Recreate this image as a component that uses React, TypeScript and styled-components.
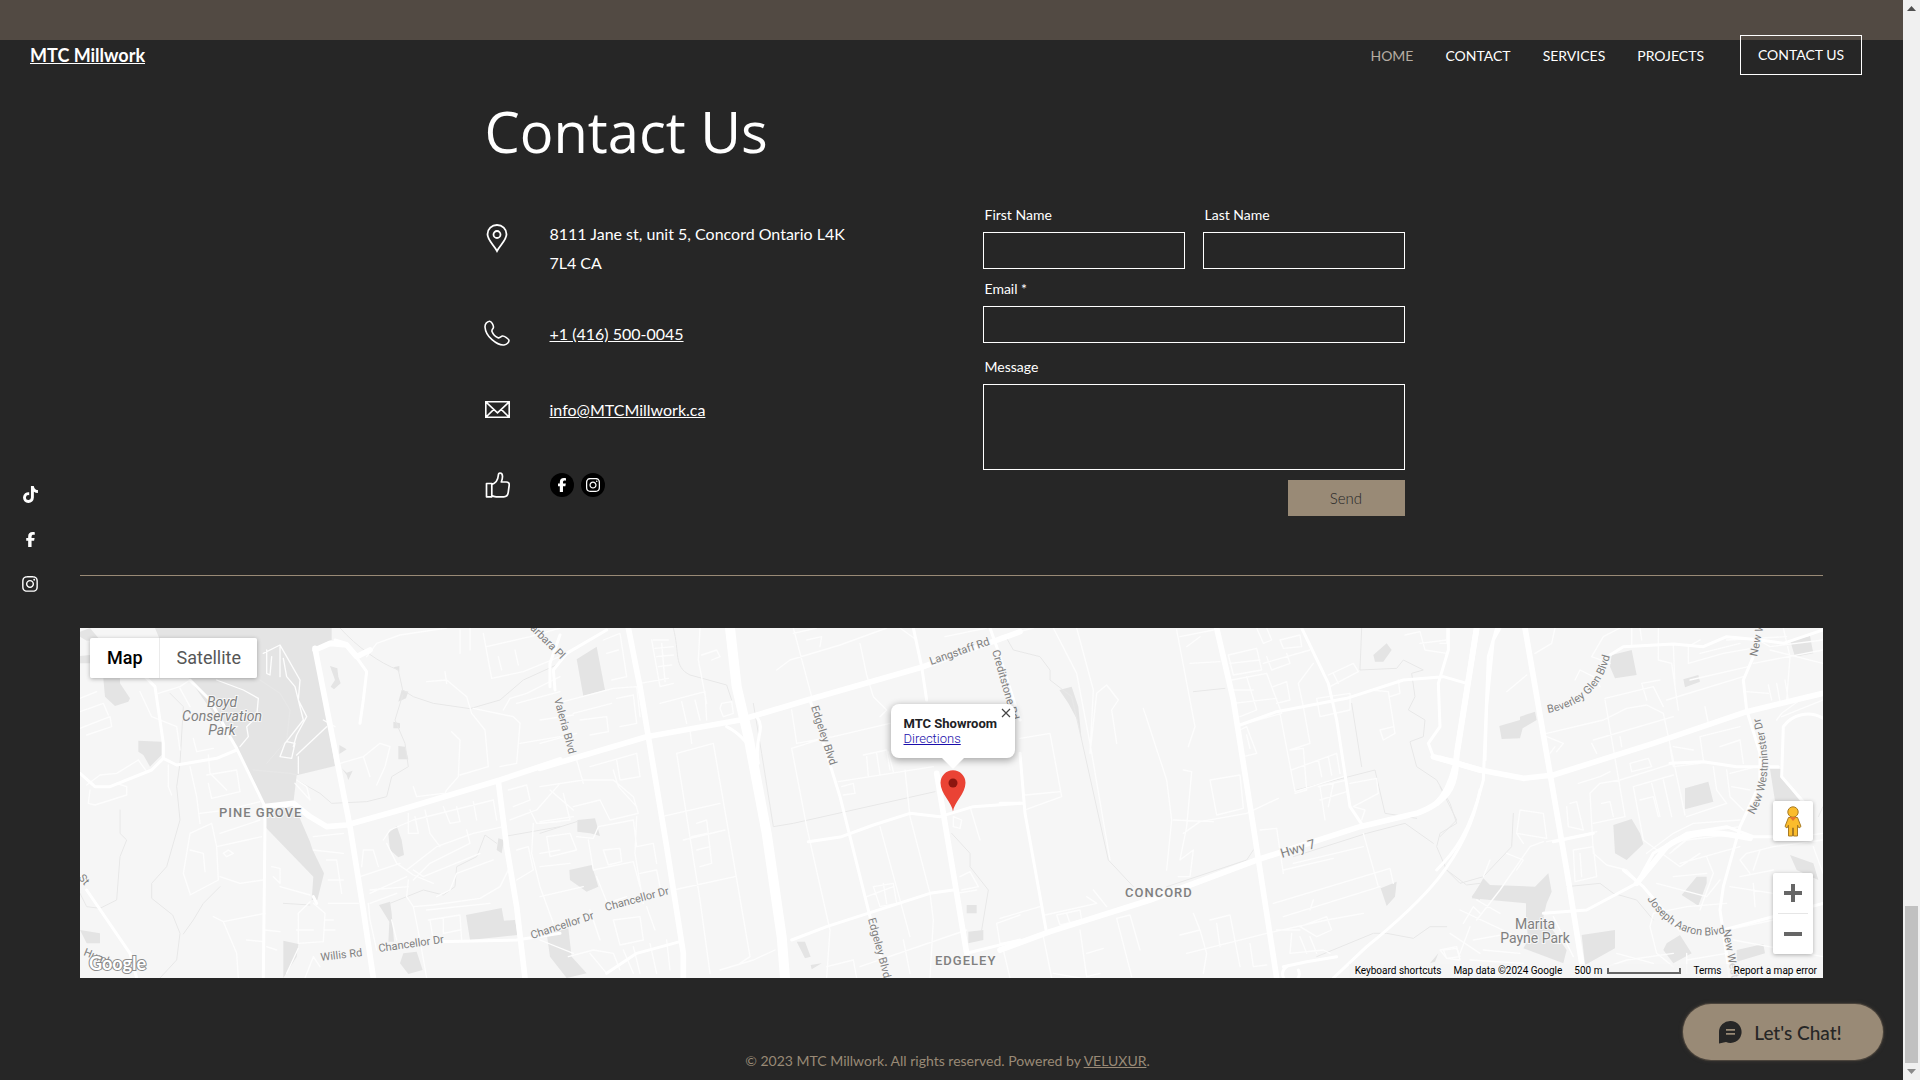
import React from "react";
import styled, { createGlobalStyle } from "styled-components";
import { FaFacebookF, FaInstagram, FaTiktok } from "react-icons/fa6";

const sans = `"Lato", "Open Sans", sans-serif`;
const wide = `"Open Sans", "Noto Sans", sans-serif`;
const roboto = `Roboto, "Liberation Sans", sans-serif`;
const tan = "#998a76";

const GlobalStyle = createGlobalStyle`
  *, *::before, *::after { box-sizing: border-box; }
  body { margin: 0; background: #262626; color: #fff; font-family: ${sans}; }
  h1, p, ul { margin: 0; padding: 0; }
  ul { list-style: none; }
  a { color: inherit; }
  button, input, textarea { font: inherit; }
`;

const Shell = styled.div`
  display: flex;
  min-height: 100vh;
`;

const Page = styled.div`
  position: relative;
  flex: 1;
  min-width: 0;
  display: flex;
  flex-direction: column;
`;

const Strip = styled.div`
  height: 40px;
  background: #524a43;
`;

const Header = styled.header`
  position: absolute;
  top: 35px;
  left: 0;
  right: 0;
  display: flex;
  align-items: center;
  justify-content: space-between;
  padding: 0 41px 0 30px;
`;

const Brand = styled.a`
  font-size: 18px;
  font-weight: 700;
  line-height: 24px;
`;

const Nav = styled.nav`
  display: flex;
  align-items: center;
  gap: 32px;
  font-size: 14px;
`;

const NavLink = styled.a<{ $active?: boolean }>`
  color: ${(p) => (p.$active ? "#b5aca2" : "#fff")};
  text-decoration: none;
`;

const ContactButton = styled.button`
  width: 122px;
  height: 40px;
  margin-left: 4px;
  padding: 0 0 2px;
  border: 1px solid #fff;
  background: transparent;
  color: #fff;
`;

const Contact = styled.main`
  width: 934px;
  max-width: 100%;
  margin: 0 auto;
  padding: 55px 14px 52px 0;
`;

const Title = styled.h1`
  font-family: ${wide};
  font-size: 56px;
  font-weight: 400;
  line-height: 72px;
`;

const Columns = styled.div`
  display: grid;
  grid-template-columns: minmax(0, 1fr) 422px;
  align-items: start;
  padding-top: 38px;
`;

const Details = styled.ul`
  padding-top: 14px;
`;

const Detail = styled.li<{ $top?: boolean }>`
  display: grid;
  grid-template-columns: 25px 304px;
  gap: 40px;
  align-items: ${(p) => (p.$top ? "start" : "center")};
  height: 76px;
  font-size: 16px;
  line-height: 29px;

  > svg {
    justify-self: center;
    margin-top: ${(p) => (p.$top ? 5 : 0)}px;
  }
`;

const Badges = styled.div`
  display: flex;
  gap: 7px;
`;

const Badge = styled.a`
  display: grid;
  place-items: center;
  width: 24px;
  height: 24px;
  border-radius: 50%;
  background: #000;
  color: #fff;
`;

const Form = styled.form`
  display: grid;
  grid-template-columns: 1fr 1fr;
  column-gap: 18px;
  row-gap: 10px;
`;

const Field = styled.label<{ $full?: boolean }>`
  display: flex;
  flex-direction: column;
  gap: 7px;
  grid-column: ${(p) => (p.$full ? "1 / -1" : "auto")};
  font-size: 14px;
  line-height: 20px;

  span { padding-left: 2px; }
`;

const Input = styled.input`
  width: 100%;
  height: 37px;
  padding: 0 10px;
  border: 1px solid #fff;
  border-radius: 0;
  background: transparent;
  color: #fff;
`;

const TextArea = styled.textarea`
  display: block;
  width: 100%;
  height: 86px;
  padding: 10px;
  border: 1px solid #fff;
  border-radius: 0;
  background: transparent;
  color: #fff;
  resize: none;
`;

const MessageField = styled(Field)`
  padding-top: 4px;
`;

const Send = styled.button`
  grid-column: 2;
  justify-self: end;
  width: 117px;
  height: 36px;
  padding: 0;
  border: 0;
  background: ${tan};
  color: #262626;
  font-size: 15px;
  font-weight: 300;
`;

const Divider = styled.hr`
  width: calc(100% - 160px);
  height: 1px;
  margin: 0 80px 52px;
  border: 0;
  background: ${tan};
`;

const MapFrame = styled.section`
  position: relative;
  height: 350px;
  margin: 0 80px;
  overflow: hidden;
  background: #f6f6f6;
  color: #000;
  font-family: ${roboto};
`;

const MapDrawing = styled.svg`
  display: block;
  width: 100%;
  height: 100%;
`;

const MapTypes = styled.div`
  position: absolute;
  top: 10px;
  left: 10px;
  display: flex;
  border-radius: 2px;
  overflow: hidden;
  box-shadow: 0 1px 4px rgba(0, 0, 0, 0.3);
`;

const MapType = styled.button<{ $on?: boolean }>`
  height: 40px;
  padding: 0 16px 2px 17px;
  border: 0;
  border-left: ${(p) => (p.$on ? "0" : "1px solid #ebebeb")};
  background: #fff;
  color: ${(p) => (p.$on ? "#000" : "#565656")};
  font-size: 18px;
  font-weight: ${(p) => (p.$on ? 500 : 400)};
`;

const Place = styled.div`
  position: absolute;
  top: 76px;
  left: calc(50% + 1px);
  width: 124px;
  height: 54px;
  margin-left: -62px;
  padding: 12px 13px;
  border-radius: 8px;
  background: #fff;
  box-shadow: 0 2px 7px 1px rgba(0, 0, 0, 0.3);
  font-size: 13px;
  line-height: 15px;
  white-space: nowrap;

  &::after {
    content: "";
    position: absolute;
    top: 100%;
    left: 50%;
    margin-left: -11px;
    border: 11px solid transparent;
    border-top-color: #fff;
    border-bottom: 0;
  }
`;

const PlaceName = styled.p`
  font-weight: 700;
  color: #202124;
`;

const Directions = styled.a`
  display: block;
  color: #1a0dab;
  font-weight: 300;
`;

const CloseButton = styled.button`
  position: absolute;
  top: 3px;
  right: 3px;
  display: grid;
  place-items: center;
  width: 12px;
  height: 12px;
  padding: 0;
  border: 0;
  background: none;
`;

const Marker = styled.svg`
  position: absolute;
  top: 142px;
  left: calc(50% + 1px);
  margin-left: -13px;
`;

const Controls = styled.div`
  position: absolute;
  right: 10px;
  bottom: 24px;
  display: flex;
  flex-direction: column;
  gap: 32px;
`;

const ControlCard = styled.div`
  width: 40px;
  border-radius: 2px;
  background: #fff;
  box-shadow: 0 1px 4px rgba(0, 0, 0, 0.3);
`;

const ControlButton = styled.button`
  display: grid;
  place-items: center;
  width: 40px;
  height: 40px;
  padding: 0;
  border: 0;
  background: none;
`;

const ControlRule = styled.div`
  height: 1px;
  margin: 0 5px;
  background: #e6e6e6;
`;

const Attribution = styled.div`
  position: absolute;
  right: 0;
  bottom: 0;
  display: flex;
  align-items: center;
  gap: 12px;
  height: 14px;
  padding: 0 6px;
  background: rgba(245, 245, 245, 0.7);
  font-size: 10px;
  line-height: 14px;
  white-space: nowrap;

  a { text-decoration: none; }
`;

const PlainButton = styled.button`
  padding: 0;
  border: 0;
  background: none;
  color: #000;
`;

const Scale = styled.span`
  display: flex;
  align-items: center;
  gap: 5px;

  &::after {
    content: "";
    width: 74px;
    height: 6px;
    border: 2px solid #666;
    border-top: 0;
  }
`;

const Footer = styled.footer`
  padding: 73px 8px 9px 0;
  color: ${tan};
  font-size: 14px;
  line-height: 20px;
  text-align: center;
`;

const SideLinks = styled.nav`
  position: absolute;
  top: 484px;
  left: 20px;
  display: flex;
  flex-direction: column;
  gap: 25px;

  a {
    display: grid;
    place-items: center;
    width: 20px;
    height: 20px;
    color: #fff;
  }
`;

const Chat = styled.button`
  position: absolute;
  right: 20px;
  bottom: 20px;
  display: flex;
  align-items: center;
  justify-content: center;
  gap: 12px;
  width: 200px;
  height: 56px;
  padding: 0 6px 0 0;
  border: 0;
  border-radius: 28px;
  background: ${tan};
  box-shadow: 0 0 0 1px #4b443c, 0 0 4px #4b443c;
  color: #262626;
  font-size: 19px;
  font-weight: 500;
`;

const ScrollTrack = styled.div`
  display: flex;
  flex-direction: column;
  align-items: center;
  justify-content: space-between;
  width: 17px;
  padding: 6px 0;
  background: #f0f0f0;
`;

const Thumb = styled.div`
  width: 13px;
  height: 157px;
  margin: auto 0 6px;
  background: #c1c1c1;
`;

/* Each tile is drawn on a 3:1 grid and placed side by side along the map. */
type Tile = {
  x: number;
  parks: string[];
  streams: string[];
  minor: string[];
  mid: string[];
  major: string[];
  highway?: string[];
};

const tiles: Tile[] = [
  {
    x: 0,
    parks: [
      "M225 24H755L755 60L705 85L765 438L650 466L640 550L690 665L698 690L732 760L712 840H695L700 770L555 620V560L450 350L330 180L240 60Z",
      "M0 35L30 24L60 60L20 62L0 50Z M0 108L30 105V130H0Z",
      "M70 175H120V190L150 235L145 245L105 258L75 230Z",
      "M175 362L245 365V405L210 440L190 405L175 395Z",
      "M750 138L772 145L775 170L782 190L762 208L752 200L765 180Z",
      "M955 378L975 380L985 418H955Z M940 305L960 310V325H940Z M965 210L985 215L978 235L955 245Z M940 142L958 138V155Z",
      "M925 640L950 618L965 660L972 705L955 712L930 690Z",
      "M1158 885L1265 864L1272 902L1305 900L1313 945L1170 960Z",
      "M897 855L930 845L935 880L942 965H925L928 905Z M610 962L655 972L650 1010L610 1074Z",
      "M970 1000L1010 995L1028 1050L985 1062L960 1030Z M0 930L60 940V970H20Z M1410 940H1440V1030L1410 1000Z",
      "M778 375L800 388L778 402Z M785 445L800 458L818 452L805 480L800 465Z",
      "M1255 655L1272 660L1265 700L1250 690Z",
    ],
    streams: [
      "M780 24C830 80 900 130 955 150L968 210L1000 230L1060 250L1170 266L1260 240L1330 180L1440 130",
      "M968 225L945 300L975 370L985 440L935 470L920 530L860 545L755 550L720 520L650 480",
      "M120 570V640L140 660L120 710L110 840L60 865L20 860L0 820",
      "M270 220L310 260L300 430L290 500L300 600L260 740L215 790V835L278 885L300 940L290 1020L240 1074",
      "M310 942L340 900L370 850L420 800",
      "M520 450L630 460L650 465 M560 430L620 360L630 270L600 220L540 180",
      "M1440 620L1270 650 M610 850L690 855",
      "M930 850L1030 810L1090 825L1125 800L1130 740L1190 710L1215 645L1250 670",
    ],
    minor: [
      "M0 235L50 215 M0 275L70 250L85 285 M0 325L90 290L95 320L20 345 M20 495L60 465L110 460L175 420L200 455 M30 510L25 550L45 555L140 525V500L110 490",
      "M180 215L215 290L290 320L300 390 M235 220L300 200L330 180 M300 205L330 260 M340 355L350 395L400 385",
      "M265 435V500L275 525 M330 440L350 530L360 610 M385 405L390 460L440 510 M385 490L395 535L480 515L470 450L380 465 M360 580L440 570L540 545 M420 640L540 600",
      "M445 690L460 700L440 710L430 700Z M410 680L500 660L545 650 M330 690L370 700L375 755 M330 820L310 760L330 640L395 610L410 680L415 780L330 825 M420 770L480 790L550 780",
      "M400 890L430 905L555 880 M430 905L470 1000L475 1074 M500 960L550 965 M575 740L600 745V790L580 770 M600 800L690 825 M555 930L600 935 M560 980L590 990",
      "M650 480L680 500L690 540 M700 690L790 700 M700 650L790 640 M740 720L770 720L785 820 M745 780H790 M690 845L655 880V970L730 965L735 880L700 850 M650 930H700 M735 900H760 M735 930H765 M655 985L620 1060 M745 850H835 M675 1074L700 1010L720 1040",
      "M550 100L600 75L620 110L660 180L655 240L680 290L650 345L640 380 M600 80V170 M560 90V160L570 165L575 110 M610 115L620 170L645 200L670 300L615 370L600 410L635 415L645 370L620 365 M650 405L740 320 M655 460V410 M410 180L490 210L535 235L530 290L500 320L505 350L480 380",
      "M645 490L690 540 M765 320L730 300 M860 110L890 70L960 45L1100 24 M1040 185L1100 180L1160 230L1175 280L1215 330L1225 440L1140 465 M1095 155L1100 190 M1115 335L1140 360L1135 470L1100 510L1090 530 M1210 40L1235 175L1330 155L1440 110 M1220 80L1350 50L1440 24 M1255 110L1265 150 M1305 90L1315 135 M1270 270L1290 235L1340 220L1440 170 M1180 265L1300 290L1320 310L1310 430L1260 440 M1310 250L1440 215 M1320 370L1440 350 M1140 30V100 M1170 24V90",
      "M780 430L850 410L900 370L930 380L915 440L890 495 M850 410L870 470 M1000 500L1010 530L1090 520",
      "M850 690L880 690L895 740 M850 690L845 740 M910 660L930 630L1000 600L1240 540L1250 600 M985 580V640L1015 640L1005 590 M1035 570L1050 640L1080 680 M1090 560L1110 610L1140 605L1130 560 M1180 545L1190 600 M920 670L950 730L1000 765L1060 790 M980 750L1070 680L1180 640L1270 620 M1160 630L1170 670L1050 730L1000 780 M840 770L960 730 M870 820L980 770 M865 850L870 900L890 990 M870 810L985 800 M870 850L950 820 M1000 750L1030 770L1200 700",
      "M985 780L980 830L1000 860L1060 855L1200 835L1260 800L1290 740 M1000 860L1020 960L1040 1074 M935 900L950 960 M1045 900L1140 885L1145 960 M1050 900L1060 960 M1090 895V940L1140 930 M1070 830L1110 810L1130 760L1240 720 M1040 870L1230 850",
      "M1285 510L1340 495L1350 540L1300 560 M1290 600L1370 570L1440 490 M1350 570L1370 610L1440 605 M1310 690L1345 680L1360 750L1310 780 M1360 610L1355 700L1380 800L1420 910 M1380 700L1440 690",
    ],
    mid: [
      "M0 460L45 500H90L215 450L250 415V370L225 200L190 165 M250 415L290 435L410 415L470 390",
      "M330 180L390 240L450 350L470 385L555 560V610L550 1074",
      "M765 60L800 70L860 155L850 240L840 310",
      "M20 810L150 1000L170 1074",
      "M1070 965L1310 960L1440 940",
      "M700 830L710 850",
      "M1440 45L1410 130V200",
    ],
    major: [
      "M705 90L750 70L800 75L830 110L870 90 M705 85L810 620L850 870L880 1074",
      "M555 560L640 550L690 590L740 620L800 615L960 570L1260 480L1440 420",
      "M1255 485L1280 680L1310 860L1335 1074",
    ],
  },
  {
    x: 460,
    parks: [
      "M110 118L170 80L195 210L130 228Z",
      "M112 600L165 595L180 648L150 640L112 635Z M88 750L155 735L175 800L140 815L90 780Z",
      "M20 940L85 925L95 1010L140 1060L80 1074L30 1010Z",
      "M770 965L795 965L812 1010L795 1015Z M1280 855H1310V880H1280Z M1285 935L1330 930V960L1285 970Z M812 1035L845 1030L815 1048Z",
    ],
    streams: [
      "M400 24C420 100 400 140 450 165L560 195L575 240 M640 250L665 400L700 620L760 610L1185 515",
      "M1235 640L1290 700V740L1345 810L1325 930 M0 640L110 605",
    ],
    minor: [
      "M340 60H385 M345 85L400 80 M350 110L400 105 M355 140L395 135 M335 60L360 200L400 190 M365 70L375 185 M300 190L385 175",
      "M190 60L240 40L260 170L215 180 M200 100L235 90 M480 24L475 120L500 250 M485 105L530 90L540 110L515 120",
      "M360 250L495 215L500 300 M425 245L440 310 M465 240L480 300 M545 250L575 245L580 280L550 290L540 265Z",
      "M70 245L220 205L290 200L300 290 M100 280L215 250 M120 300L200 290L205 335L150 345 M230 235L280 225L290 310L240 320 M0 300L100 285 M0 370L110 340",
      "M110 420L130 490 M0 500L130 480L220 480L280 530L295 580L210 600L180 540L100 560 M150 440L290 400L300 470L240 480L230 420 M220 450L235 500L290 560 M30 510L100 570 M0 605L100 590 M70 520L90 600L0 610",
      "M20 650L90 640L110 690L30 710Z M110 650L160 655L175 620L280 600L290 680 M145 660L160 750L280 725L300 800 M190 690L240 685L245 725L205 735Z M290 590L285 700L310 850 M290 680L340 670L350 730 M300 760L350 750L360 800 M0 740L90 730 M0 830L130 800 M170 770L210 870 M200 850L260 830 M150 870L180 960 M220 900L300 890L310 960L240 975Z M320 860L345 930",
      "M85 1010L160 990L220 1000L240 1050 M150 1000L200 1060 M0 960L100 1000 M250 990L280 1060 M280 980L300 1060 M330 970L350 1060 M380 960L390 1050",
      "M410 400L520 370L630 1010L600 1030 M410 400L480 840L510 1060 M365 590L540 550 M430 660L555 630 M400 810L585 770 M470 610L500 600L515 730L480 740 M455 650L500 640 M470 690L510 680 M450 330L455 370 M540 1050L640 1020L705 990",
      "M710 150L750 120L900 75L1040 24 M760 24L815 230 M760 40L830 24 M800 60L845 50L840 80 M960 70L980 165L1000 230L1040 270L1020 290 M1080 24L1130 60",
      "M755 270L770 370L880 350L1050 310 M755 385L800 620L870 930L860 1074 M755 385L850 355 M895 485L990 470L1180 440 M970 405L1040 390L1050 450 M980 410L985 470 M1010 400L1020 465 M1045 395L1060 455 M905 500L940 490L945 520L910 525",
      "M1095 450L1110 590L1170 820L1180 900L1170 1074 M1020 620L1110 950 M1000 800L1060 790L1070 850L1020 860Z M980 830L1060 800 M1030 790L1040 850 M960 1040L1280 930 M860 1040L940 1020L950 1074 M1090 960L1110 1060",
      "M1290 560L1320 660 M1240 590L1265 600L1260 625L1240 620Z M1260 770L1290 755L1315 800L1265 810 M1250 820L1310 810 M1370 910L1440 885 M1370 910L1380 970L1440 960 M1215 50L1340 24",
    ],
    mid: [
      "M45 210L40 150L80 100L200 30",
      "M805 665L905 650L1000 615L1110 580L1200 590L1300 560L1440 550",
      "M755 960L860 920L1170 820L1240 810",
      "M810 240L900 530L990 890L1040 1074",
      "M1120 24L1145 140L1160 240 M1350 24L1370 80L1440 300",
      "M1280 1000L1440 960 M200 1060L290 1000L420 965",
      "M560 320C600 340 640 380 650 440 M650 290C680 330 640 350 655 430",
    ],
    major: [
      "M265 24L300 200L330 380L380 680L430 1000V1074",
      "M0 445L320 350L600 300L820 235L1150 140L1400 50L1440 35",
      "M1190 460L1220 640L1280 1000",
    ],
    highway: ["M570 24L590 200L625 350L680 640L725 950L735 1074"],
  },
  {
    x: 920,
    parks: [
      "M178 210L215 200L235 260L245 360L232 300L205 250Z",
      "M1120 105L1160 70L1175 90L1150 125L1125 125Z",
      "M1142 805L1190 785L1185 830L1160 858Z M1415 830L1440 795V840Z M1290 1030L1315 1000L1305 1025Z",
    ],
    streams: [
      "M20 55L40 90L120 110L150 150V180L215 230L245 360L325 720L400 800",
      "M580 215L675 205 M1085 24L1080 150L1190 145L1210 120L1270 150L1235 160L1245 230L1225 270L1275 300L1270 350L1230 365L1250 440L1310 480L1350 550L1370 610L1320 640L1310 680L1340 750L1400 795L1440 790",
      "M500 800L740 720L760 690 M880 710L1100 640L1215 610L1300 670 M890 510L1125 450L1155 580L1250 595 M1055 250L1085 440 M950 1010L1120 940H1160L1240 955L1290 920L1340 920",
    ],
    minor: [
      "M160 24L230 160L270 370L330 720 M230 24L280 210L270 400L290 220L320 195L355 240L335 270L350 370 M430 265L500 480L515 600L500 750 M0 50L100 24",
      "M60 355L150 340L185 530L75 570 M75 525L180 515",
      "M530 30L585 320L565 380 M550 450L575 455L560 620L540 720L580 690L570 770L535 770 M550 640L600 605L740 580L835 535 M520 600L640 605 M630 480L720 465L730 565L650 585Z",
      "M540 50L640 30 M570 130L660 125 M560 80L600 50 M685 105L770 85L785 150L700 165Z M690 130L780 120 M770 24L790 70L815 60L800 24 M695 180L800 160L845 280L720 315 M700 210H760 M700 250L830 235 M740 170L770 270L720 290 M790 130L930 90 M840 60L900 45L905 80L850 85Z M800 110L815 150L870 130L860 100 M820 200L860 185L870 240L830 250 M940 130L895 190L910 260L930 370L870 390",
      "M840 280L885 515L1030 470 M870 390L910 385L920 510L885 520 M875 450L1010 400 M955 420L965 470 M985 410L995 465 M1010 400L1020 460 M955 500L1040 480 M960 540L1040 515 M960 500L975 600 M1000 490L985 560 M1050 490L1130 475L1135 520L1060 560L1095 570L1085 600 M985 165L1060 130L1075 155L990 200 M950 235L1050 220V270L960 290Z M1000 160L1015 190 M1110 210L1165 215L1185 340L1150 360L1140 330L1180 320 M1195 180L1200 220L1170 230 M1215 45L1260 35L1275 90L1340 100 M1260 70L1340 60",
      "M720 330L740 320L770 400L730 410 M740 345L750 385 M780 630L830 625L850 760 M850 750L1000 715 M880 730L1090 680 M820 850L1170 745L1180 790 M850 890L1140 800 M930 870L940 840 M1090 640L1135 800",
      "M540 945L600 930L580 880 M560 1000L800 940L980 900L1090 880 M600 930L620 1000L610 1060 M630 900L690 885L720 1040 M650 910L660 980 M750 970L760 1040L800 1035 M875 940L870 1000L970 990L990 1000 M900 920L980 890L995 930L950 950Z M930 950L950 1000 M900 950L920 1000 M830 930H900",
      "M0 895L120 860 M170 885L240 870L245 900L180 915Z M200 880L210 910 M135 885L290 850L260 830 M280 810L320 860 M240 930L260 1070L300 1060 M350 895L390 885L420 990 M350 895L395 1070 M160 1060L240 1074 M260 1000L310 985 M10 990L30 1074 M130 950L155 1074",
      "M1320 990L1370 980L1380 1020L1340 1015Z M1390 910L1420 860L1440 880 M1350 940L1440 1000",
    ],
    mid: [
      "M60 400L75 580L140 940 M0 550H65",
      "M720 315L830 275L1040 235L1210 180L1330 170L1400 190",
      "M905 24L985 190L1010 300L1050 560L1090 620",
      "M1345 24V90L1315 190L1320 320L1285 370L1300 410L1360 420",
      "M850 1040L920 1025L1010 1010 M1440 510C1400 720 1260 850 1100 980L1000 1074",
      "M860 1040A25 25 0 1 0 895 1050",
    ],
    major: [
      "M0 990L150 935L450 840L770 720L1080 620L1250 580C1360 540 1370 480 1370 400L1430 24",
      "M650 24L700 240L760 620L830 1074 M1300 410L1440 450",
    ],
  },
  {
    x: 1360,
    parks: [
      "M178 318L240 300V290L285 275L290 300L248 325L240 355L185 357Z",
      "M515 105L575 90L590 165L525 175L510 140Z",
      "M730 178L775 165L780 185L735 202Z M1050 60L1110 48L1120 100L1065 110Z",
      "M735 505L805 485L820 545L735 568Z M990 447H1025L1030 480L1080 543H1005Z",
      "M520 615L575 597L600 640L610 672L560 720L525 700Z",
      "M725 825L770 770H800V790L775 857Z M425 945L525 930V985L435 1035Z",
      "M680 970L720 945L755 1000L700 1030L670 990Z M890 990L970 972L975 1000L890 1025Z",
      "M95 835L130 775L150 795L285 800L325 760L335 815L320 850L310 890L380 990L370 1030L250 985L265 960L258 900V850Z M1050 705L1120 730L1135 780L1070 750Z",
    ],
    streams: [
      "M220 580L215 680L130 770L60 790L20 750 M0 500L50 600L0 650 M380 800L480 790L520 820L590 840L640 900 M1135 590L1149 560",
    ],
    minor: [
      "M345 24L335 70L285 100 M200 215L260 165 M0 70H20V24 M455 110L490 50L540 24 M455 110L510 130 M600 24L605 60 M575 24V80 M405 180L420 150L460 170L480 200 M495 235L640 200L670 260",
      "M655 24V120L695 130L715 270 M700 75L705 200 M745 130V80L780 60 M745 130L850 100L935 85 M780 100L900 70 M680 240L910 170 M750 180L925 140 M860 60L1040 50 M955 60L990 80L1149 60 M940 130L1149 90 M1030 24L1050 110L1040 240 M990 90L1149 130 M985 195L995 240 M1010 190L1020 245 M1035 180L1045 240 M920 215L985 220 M660 180L605 190L620 240",
      "M320 340L490 300L560 265L620 255L670 280L735 585 M495 240L555 590 M320 350L370 370L350 395 M345 380L330 400 M460 360L700 290 M455 370L470 400 M570 430L625 415L635 440L575 455Z M540 350L545 380 M795 260L805 310 M780 350L900 320 M840 380L900 360L910 430 M780 350L790 420 M1025 290L1149 240 M1010 300L1025 280L1080 240",
      "M415 490L480 470L510 455 M450 520L480 490L540 480L700 430 M450 520L460 700L500 735L560 750L590 780 M580 500L700 465 M580 500L610 660L720 740L780 700 M600 540L640 530L655 590 M635 490L660 590 M670 480L695 590 M485 550L510 545L520 590 M390 550L410 545L430 630 M380 560L385 620L430 630 M240 570L310 580L320 655L230 640Z M460 610L555 590",
      "M400 690L460 680L470 770L405 785Z M420 700L425 770 M310 665L270 680L180 810L110 900 M200 700L250 720L230 750 M150 720L130 770 M250 670L230 640 M320 665L470 635",
      "M90 920L60 1000 M60 870L230 950 M110 840L180 880 M10 990L50 985L60 1010L20 1015Z M100 960L210 940 M130 990L240 1000 M90 1020L250 1030 M340 890L400 1010",
      "M640 880L630 920L650 1000L700 1040 M640 880L740 860L860 850 M800 710L820 760L780 870 M700 770L800 760 M720 730L900 680 M690 700L740 660L900 640 M620 700L700 640L760 610L900 600 M740 590L860 550L830 510 M860 450L870 530L910 570 M820 440L830 510 M870 460L950 440 M875 500L930 510",
      "M930 760L900 720L920 700L1000 680L1149 660 M900 770L1000 750 M870 800L1000 820 M940 790L945 860 M960 690L940 750 M1000 660L1149 640 M860 930L1000 900 M880 960L1149 1010 M740 1020L860 1000 M740 1000V1060 M440 1060L560 1020L700 1000 M530 1000L640 1030",
      "M700 690L760 640L900 620 M650 790L800 830L840 780 M1120 680L1149 760 M690 380L700 440L780 430 M700 380L760 390",
    ],
    mid: [
      "M510 105L550 80L700 72L790 80L860 50L960 60L1030 70L1149 30",
      "M940 110L910 180L920 270L960 400L960 490L900 620L850 800L840 870L870 1074",
      "M690 430L790 425L890 440H1015 M310 880L440 870L590 790L640 700L740 640L860 620L940 650H1000 M340 665L460 640",
      "M1149 295A90 90 0 0 0 1030 320L1025 470L1090 545",
      "M550 750L610 800L720 930 M170 24L145 110L130 480C90 640 40 700 -10 750",
      "M180 24L160 60L140 260L135 420 M850 930L1149 850",
    ],
    major: [
      "M0 415L120 450L250 475L340 465L640 370L920 275L1149 220",
      "M255 24L330 460L380 750L430 1060 M110 24L45 440C30 500 10 530 -10 550",
      "M590 790L680 680C760 620 860 640 930 655",
    ],
  },
];

type Label = { x: number; y: number; r: number; t: string; s?: number };

const streetLabels: Label[] = [
  { x: 445, y: -4, r: 45, t: "Barbara Pl" },
  { x: 474, y: 71, r: 75, t: "Valeria Blvd" },
  { x: 731, y: 79, r: 72, t: "Edgeley Blvd" },
  { x: 788, y: 291, r: 75, t: "Edgeley Blvd" },
  { x: 299, y: 324, r: -8, t: "Chancellor Dr" },
  { x: 526, y: 283, r: -15, t: "Chancellor Dr" },
  { x: 452, y: 311, r: -18, t: "Chancellor Dr" },
  { x: 241, y: 333, r: -7, t: "Willis Rd" },
  { x: 851, y: 37, r: -19, t: "Langstaff Rd" },
  { x: 912, y: 23, r: 74, t: "Creditstone Rd" },
  { x: 1202, y: 230, r: -17, t: "Hwy 7", s: 13 },
  { x: 1677, y: 29, r: -78, t: "New Westminster Dr" },
  { x: 1643, y: 302, r: 80, t: "New Westminster Dr" },
  { x: 3, y: 327, r: 22, t: "Humber" },
  { x: -2, y: 250, r: 50, t: "St" },
];

const layerStyle = {
  parks: { fill: "#e4e4e4", stroke: "none", width: 0 },
  streams: { fill: "none", stroke: "#e8e8e8", width: 3 },
  minor: { fill: "none", stroke: "#fdfdfd", width: 4 },
  mid: { fill: "none", stroke: "#fff", width: 9 },
  major: { fill: "none", stroke: "#fff", width: 17 },
  highway: { fill: "none", stroke: "#fff", width: 30 },
};

const layers = ["parks", "streams", "minor", "mid", "major", "highway"] as const;

const MapArt = () => (
  <MapDrawing viewBox="0 0 1743 350" preserveAspectRatio="xMidYMid slice" role="img" aria-label="Street map of Concord">
    <rect width="1743" height="350" fill="#f6f6f6" />
    {layers.map((layer) => (
      <g key={layer}>
        {tiles.map((tile) => (
          <g key={tile.x} transform={`translate(${tile.x} -8) scale(0.33333)`}>
            <path
              d={(tile[layer] ?? []).join(" ")}
              fill={layerStyle[layer].fill}
              stroke={layerStyle[layer].stroke}
              strokeWidth={layerStyle[layer].width}
              strokeLinejoin="round"
              strokeLinecap="round"
            />
          </g>
        ))}
      </g>
    ))}
    <g fill="#808080" stroke="#f7f7f7" strokeWidth="2" paintOrder="stroke" fontFamily={roboto} fontSize="11">
      {streetLabels.map((l) => (
        <text key={`${l.x}-${l.y}`} transform={`translate(${l.x} ${l.y}) rotate(${l.r})`} fontSize={l.s ?? 11}>
          {l.t}
        </text>
      ))}
      <path id="beverley" d="M1468 85Q1518 76 1530 28" fill="none" stroke="none" />
      <path id="westminster" d="M1674 187Q1700 142 1676 78" fill="none" stroke="none" />
      <path id="joseph" d="M1567 271Q1600 320 1652 303" fill="none" stroke="none" />
      <text><textPath href="#beverley">Beverley Glen Blvd</textPath></text>
      <text><textPath href="#westminster">New Westminster Dr</textPath></text>
      <text><textPath href="#joseph">Joseph Aaron Blvd</textPath></text>
      <g fontSize="14" textAnchor="middle">
        <g fontStyle="italic">
          <text x="142" y="79">Boyd</text>
          <text x="142" y="93">Conservation</text>
          <text x="142" y="107">Park</text>
        </g>
        <text x="1455" y="301">Marita</text>
        <text x="1455" y="315">Payne Park</text>
      </g>
      <g fontSize="13" letterSpacing="1" fontWeight="500">
        <text x="139" y="189">PINE GROVE</text>
        <text x="855" y="337">EDGELEY</text>
        <text x="1045" y="269">CONCORD</text>
      </g>
    </g>
    <text x="9" y="342" fontFamily={sans} fontSize="18" fontWeight="700" fill="#fff" stroke="#8c8c8c" strokeWidth="2" paintOrder="stroke">
      Google
    </text>
  </MapDrawing>
);

const PinIcon = () => (
  <svg width="22" height="29" viewBox="0 0 22 29" fill="none" stroke="#fff" strokeWidth="1.8" aria-hidden="true">
    <path d="M11 27C8 21.500 1.500 16 1.500 10.300a9.500 9.300 0 0 1 19 0C20.500 16 14 21.500 11 27Z" />
    <circle cx="11" cy="10.500" r="3.500" />
  </svg>
);

const PhoneIcon = () => (
  <svg width="26" height="26" viewBox="0 0 26 26" fill="none" stroke="#fff" strokeWidth="1.600" strokeLinejoin="round" aria-hidden="true">
    <path d="M5.500 1.200C3 1.400 .9 4 1 7c.3 4.500 3 9.300 7 12.700 4 3.500 8.500 5.700 12 5.300 3-.4 5-2.700 5-4.500 0-1.600-4.800-4.700-6.500-4.500-1.700.2-2.400 2.500-4.500 1.700-2.300-1-5.200-4-6-6.200C7.300 9.500 9.600 9 9.500 7 9.400 5.200 7.500 1 5.500 1.200Z" />
  </svg>
);

const MailIcon = () => (
  <svg width="25" height="17" viewBox="0 0 25 17" fill="none" stroke="#fff" strokeWidth="1.600" aria-hidden="true">
    <path d="M.8.8h23.400v15.400H.8ZM.8.8l11.700 11L24.200.8M.8 16.200l8-7.800M24.200 16.200l-8-7.800" />
  </svg>
);

const ThumbIcon = () => (
  <svg width="25" height="26" viewBox="0 0 25 26" fill="none" stroke="#fff" strokeWidth="1.700" strokeLinejoin="round" aria-hidden="true">
    <path d="M1.500 11.500h5.300v13.300H1.500ZM6.800 12.500c4-1.500 6.200-5 6.500-9 .1-1.800.7-2.500 1.700-2.500 1.700 0 2.500 1.300 2.500 3.500 0 2-.6 4-1.200 5.500h5c2 0 3.200 1.200 2.900 3.200l-1 7.500c-.4 2.700-1.900 4.100-4.500 4.100h-7.500c-1.800 0-3.400-.5-4.400-1.300Z" />
  </svg>
);

const Pegman = () => (
  <svg width="18" height="31" viewBox="0 0 18 31" aria-hidden="true">
    <g fill="#fbbc2c" stroke="#a87b24" strokeWidth="1">
      <path d="M4.500 11.500h9l3.500 9-2 1.500-1.500-3v11h-4V22h-1v8h-4V19L3 22l-2-1.500Z" />
      <circle cx="9" cy="6" r="5.200" />
    </g>
    <path d="M5.500 11h7L9 15Z" fill="#e8752c" />
  </svg>
);

export default function App() {
  return (
    <>
      <GlobalStyle />
      <Shell>
        <Page>
          <Strip />
          <Contact>
            <Title>Contact Us</Title>
            <Columns>
              <Details>
                <Detail $top>
                  <PinIcon />
                  <p>8111 Jane st, unit 5, Concord Ontario L4K 7L4 CA</p>
                </Detail>
                <Detail>
                  <PhoneIcon />
                  <p><a href="tel:+14165000045">+1 (416) 500-0045</a></p>
                </Detail>
                <Detail>
                  <MailIcon />
                  <p><a href="mailto:info@MTCMillwork.ca">info@MTCMillwork.ca</a></p>
                </Detail>
                <Detail>
                  <ThumbIcon />
                  <Badges>
                    <Badge href="#facebook" aria-label="Facebook"><FaFacebookF size={14} /></Badge>
                    <Badge href="#instagram" aria-label="Instagram"><FaInstagram size={16} /></Badge>
                  </Badges>
                </Detail>
              </Details>
              <Form onSubmit={(e) => e.preventDefault()}>
                <Field><span>First Name</span><Input name="first" /></Field>
                <Field><span>Last Name</span><Input name="last" /></Field>
                <Field $full><span>Email *</span><Input name="email" type="email" required /></Field>
                <MessageField $full><span>Message</span><TextArea name="message" /></MessageField>
                <Send type="submit">Send</Send>
              </Form>
            </Columns>
          </Contact>
          <Divider />
          <MapFrame>
            <MapArt />
            <MapTypes>
              <MapType $on type="button">Map</MapType>
              <MapType type="button">Satellite</MapType>
            </MapTypes>
            <Marker width="26" height="42" viewBox="0 0 26 42" aria-hidden="true">
              <path d="M13 41.500C12.300 33 .5 24 .5 12.800a12.500 12.500 0 0 1 25 0C25.500 24 13.700 33 13 41.500Z" fill="#ea4335" />
              <circle cx="13" cy="13" r="4.500" fill="#8c1610" />
            </Marker>
            <Place>
              <PlaceName>MTC Showroom</PlaceName>
              <Directions href="#directions">Directions</Directions>
              <CloseButton type="button" aria-label="Close">
                <svg width="10" height="10" viewBox="0 0 10 10" stroke="#444" strokeWidth="1.200"><path d="M1 1l8 8M9 1L1 9" /></svg>
              </CloseButton>
            </Place>
            <Controls>
              <ControlCard>
                <ControlButton type="button" aria-label="Street View"><Pegman /></ControlButton>
              </ControlCard>
              <ControlCard>
                <ControlButton type="button" aria-label="Zoom in">
                  <svg width="18" height="18" viewBox="0 0 18 18" fill="#666"><path d="M7 0h4v7h7v4h-7v7H7v-7H0V7h7Z" /></svg>
                </ControlButton>
                <ControlRule />
                <ControlButton type="button" aria-label="Zoom out">
                  <svg width="18" height="18" viewBox="0 0 18 18" fill="#666"><path d="M0 7h18v4H0Z" /></svg>
                </ControlButton>
              </ControlCard>
            </Controls>
            <Attribution>
              <PlainButton type="button">Keyboard shortcuts</PlainButton>
              <span>Map data ©2024 Google</span>
              <Scale>500 m</Scale>
              <a href="#terms">Terms</a>
              <a href="#report">Report a map error</a>
            </Attribution>
          </MapFrame>
          <Footer>
            © 2023 MTC Millwork. All rights reserved. Powered by <a href="#veluxur">VELUXUR</a>.
          </Footer>

          <Header>
            <Brand href="#home">MTC Millwork</Brand>
            <Nav>
              <NavLink $active href="#home">HOME</NavLink>
              <NavLink href="#contact">CONTACT</NavLink>
              <NavLink href="#services">SERVICES</NavLink>
              <NavLink href="#projects">PROJECTS</NavLink>
              <ContactButton type="button">CONTACT US</ContactButton>
            </Nav>
          </Header>
          <SideLinks aria-label="Social">
            <a href="#tiktok" aria-label="TikTok"><FaTiktok size={17} /></a>
            <a href="#facebook" aria-label="Facebook"><FaFacebookF size={15} /></a>
            <a href="#instagram" aria-label="Instagram"><FaInstagram size={18} /></a>
          </SideLinks>
          <Chat type="button">
            <svg width="24" height="24" viewBox="0 0 24 24" aria-hidden="true">
              <path d="M12.500 1a11 11 0 1 1-4.500 21L1 23.500V12A11.200 11.200 0 0 1 12.500 1Z" fill="#262626" />
              <path d="M8 9.800h9M8 13.800h9" stroke={tan} strokeWidth="1.700" />
            </svg>
            Let's Chat!
          </Chat>
        </Page>
        <ScrollTrack aria-hidden="true">
          <svg width="9" height="5" viewBox="0 0 9 5"><path d="M0 5L4.500 0L9 5Z" fill="#505050" /></svg>
          <Thumb />
          <svg width="9" height="5" viewBox="0 0 9 5"><path d="M0 0h9L4.500 5Z" fill="#8a8a8a" /></svg>
        </ScrollTrack>
      </Shell>
    </>
  );
}
